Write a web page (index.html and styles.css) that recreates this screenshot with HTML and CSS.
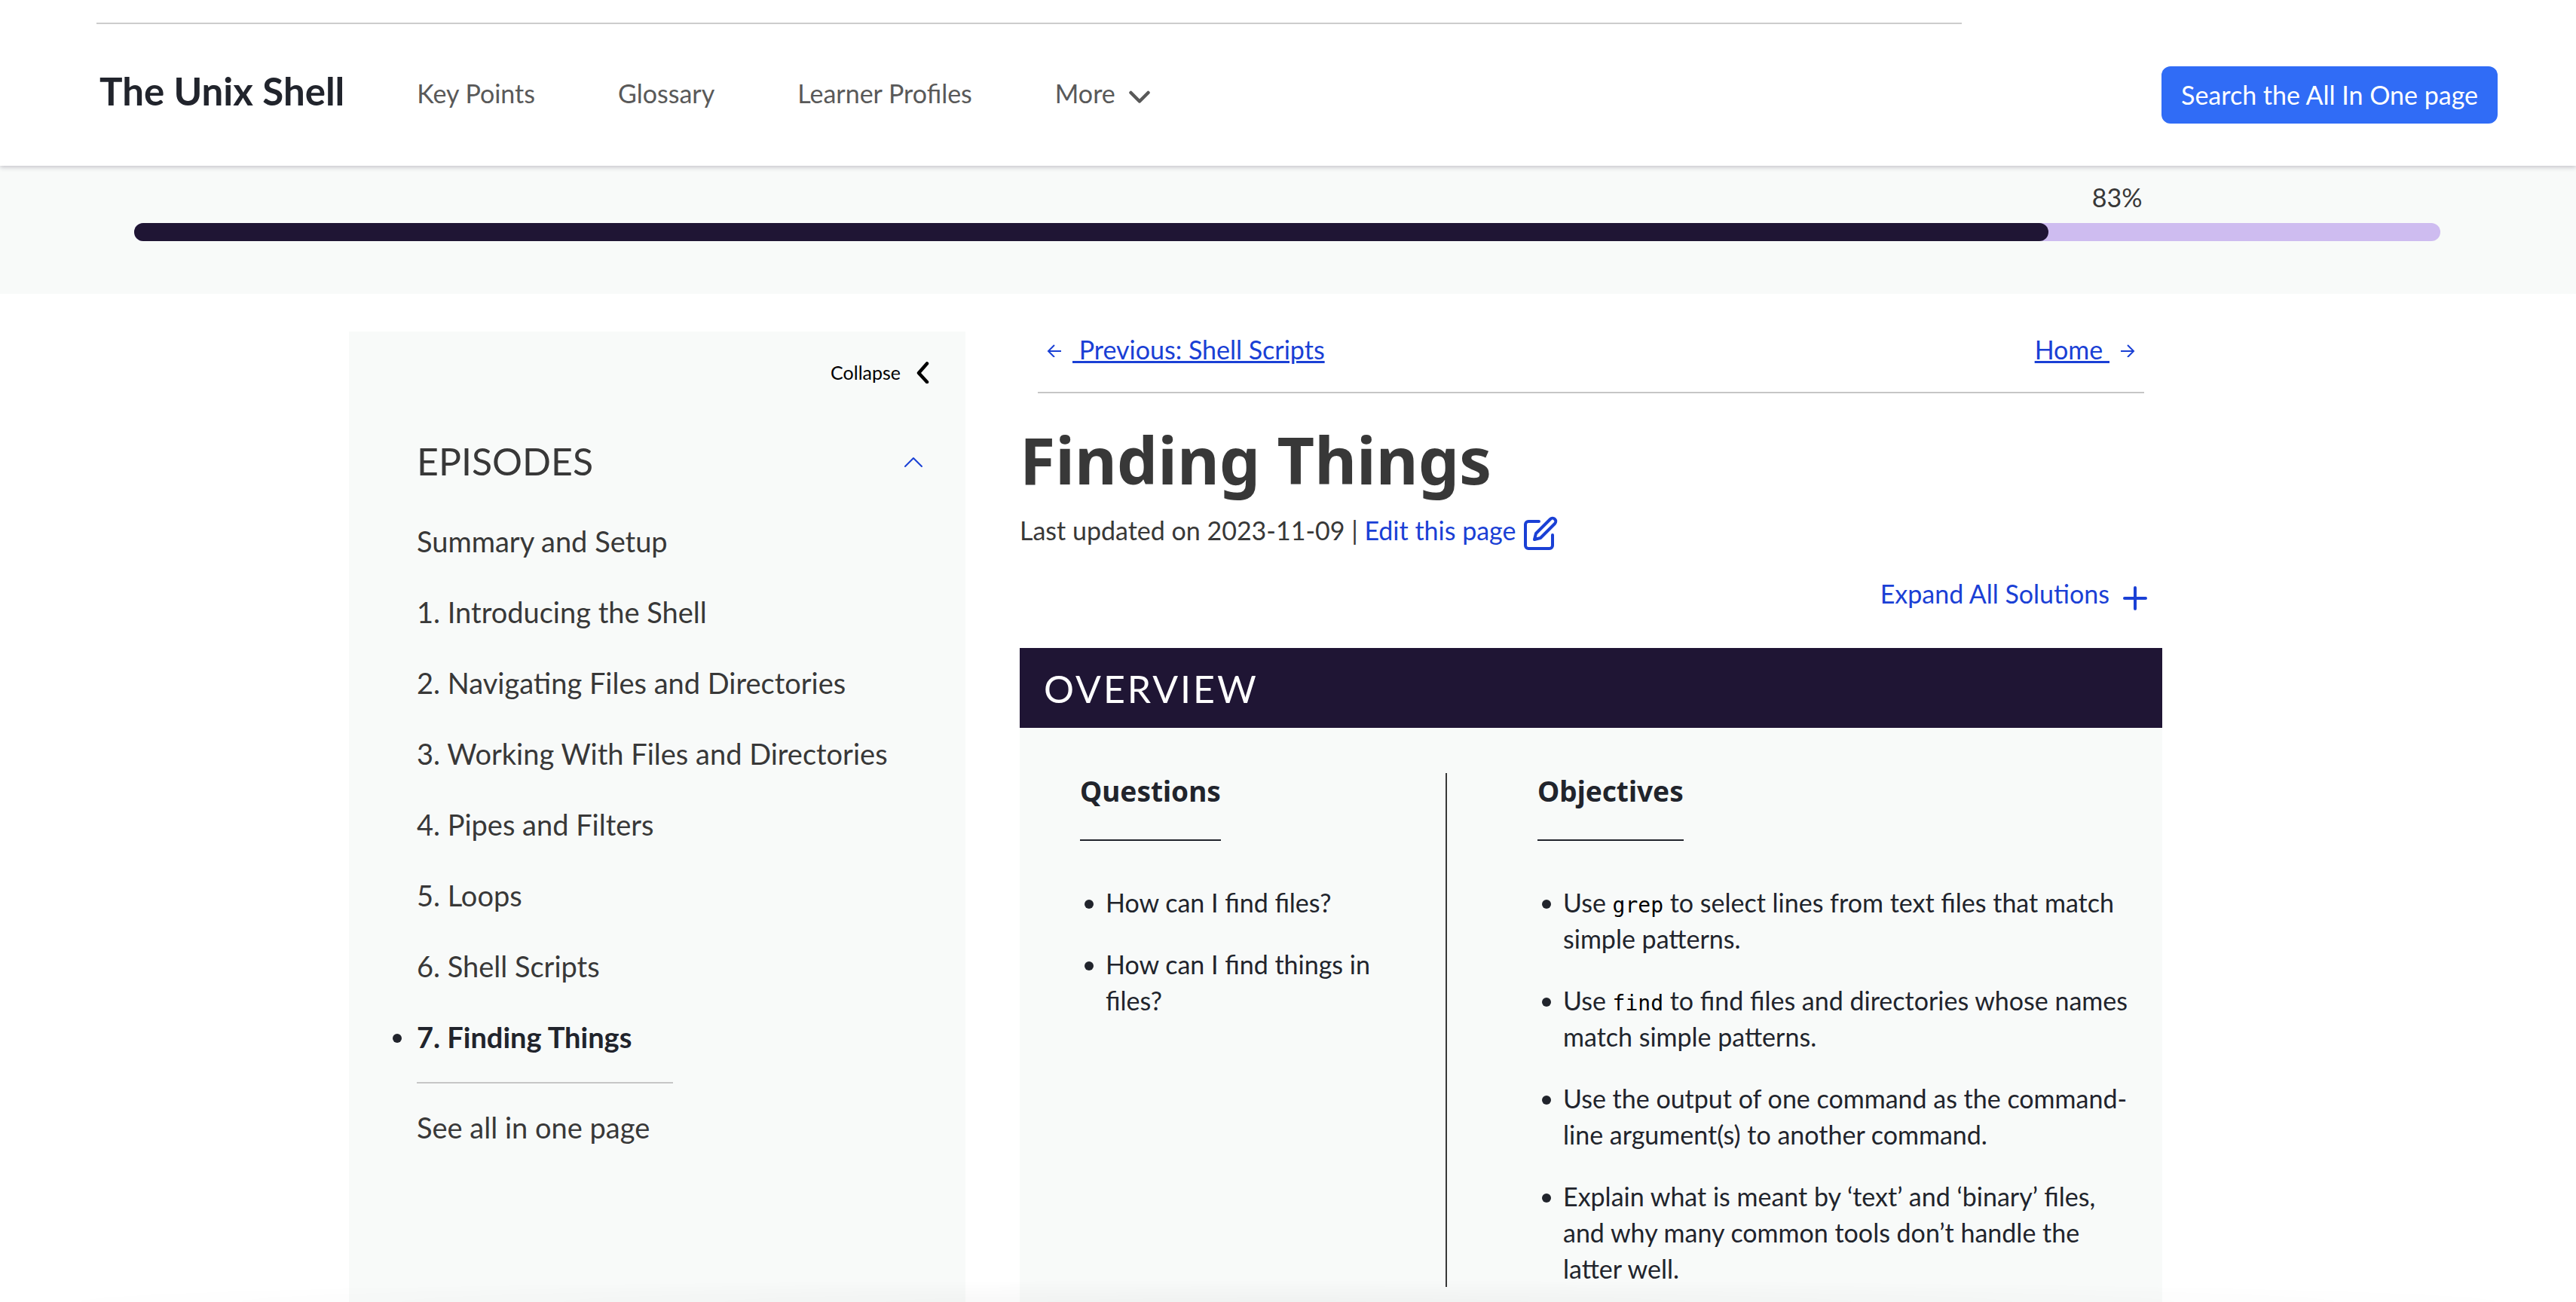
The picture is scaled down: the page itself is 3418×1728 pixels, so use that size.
FILE: index.html
```html
<!DOCTYPE html>
<html lang="en">
<head>
<meta charset="utf-8">
<title>The Unix Shell: Finding Things</title>
<link rel="stylesheet" href="styles.css">
</head>
<body>
<header class="site-header">
  <hr class="header-rule">
  <div class="header-bar">
    <a class="brand" href="#">The Unix Shell</a>
    <nav class="main-nav" aria-label="Main">
      <a href="#">Key Points</a>
      <a href="#">Glossary</a>
      <a href="#">Learner Profiles</a>
      <button class="more" type="button">More
        <svg width="32" height="32" viewBox="0 0 32 32" aria-hidden="true"><path d="M4.500 15L16 26.500 27.500 15" fill="none" stroke="currentColor" stroke-width="4.500" stroke-linecap="round" stroke-linejoin="round"/></svg>
      </button>
    </nav>
    <button class="search" type="button">Search the All In One page</button>
  </div>
</header>

<section class="progress" aria-label="Lesson progress">
  <div class="progress-label" style="width: 83%"><span>83%</span></div>
  <div class="track"><div class="fill" style="width: 83%"></div></div>
</section>

<div class="layout">
  <aside class="sidebar">
    <button class="collapse" type="button">Collapse
      <svg width="18" height="30" viewBox="0 0 18 30" aria-hidden="true"><path d="M15 3.500L4 16l11 12" fill="none" stroke="currentColor" stroke-width="4.500" stroke-linecap="round" stroke-linejoin="round"/></svg>
    </button>
    <button class="episodes-toggle" type="button">EPISODES
      <svg width="26" height="20" viewBox="0 0 26 20" aria-hidden="true"><path d="M2 17L13 6l11 11" fill="none" stroke="#1a40d5" stroke-width="2" stroke-linecap="round" stroke-linejoin="round"/></svg>
    </button>
    <ul class="episodes">
      <li><a href="#">Summary and Setup</a></li>
      <li><a href="#">1. Introducing the Shell</a></li>
      <li><a href="#">2. Navigating Files and Directories</a></li>
      <li><a href="#">3. Working With Files and Directories</a></li>
      <li><a href="#">4. Pipes and Filters</a></li>
      <li><a href="#">5. Loops</a></li>
      <li><a href="#">6. Shell Scripts</a></li>
      <li class="current">7. Finding Things</li>
    </ul>
    <hr class="sidebar-rule">
    <a class="all-in-one" href="#">See all in one page</a>
  </aside>

  <main class="content">
    <nav class="pager" aria-label="Episodes">
      <div class="pager-item">
        <svg width="20" height="20" viewBox="0 0 20 20" aria-hidden="true"><path d="M19 12H2M10 4l-8 8 8 8" fill="none" stroke="currentColor" stroke-width="2"/></svg>
        <a href="#">&nbsp;Previous: Shell Scripts</a>
      </div>
      <div class="pager-item">
        <a href="#">Home&nbsp;</a>
        <svg width="20" height="20" viewBox="0 0 20 20" aria-hidden="true"><path d="M1 12h17M10 4l8 8-8 8" fill="none" stroke="currentColor" stroke-width="2"/></svg>
      </div>
    </nav>
    <h1>Finding Things</h1>
    <p class="updated">Last updated on 2023-11-09 | <a href="#">Edit this page <svg width="48" height="48" viewBox="0 0 24 24" aria-hidden="true"><path d="M11 4H4a2 2 0 0 0-2 2v14a2 2 0 0 0 2 2h14a2 2 0 0 0 2-2v-7M18.500 2.500a2.121 2.121 0 0 1 3 3L12 15l-4 1 1-4z" fill="none" stroke="currentColor" stroke-width="2" stroke-linecap="round" stroke-linejoin="round"/></svg></a></p>
    <button class="expand" type="button">Expand All Solutions
      <svg width="36" height="36" viewBox="0 0 36 36" aria-hidden="true"><path d="M18 4v28M4 18h28" fill="none" stroke="currentColor" stroke-width="4" stroke-linecap="round"/></svg>
    </button>
    <section class="overview">
      <h2>OVERVIEW</h2>
      <div class="overview-body">
        <div class="questions">
          <h3>Questions</h3>
          <ul>
            <li>How can I find files?</li>
            <li>How can I find things in files?</li>
          </ul>
        </div>
        <div class="objectives">
          <h3>Objectives</h3>
          <ul>
            <li>Use <code>grep</code> to select lines from text files that match simple patterns.</li>
            <li>Use <code>find</code> to find files and directories whose names match simple patterns.</li>
            <li>Use the output of one command as the command-line argument(s) to another command.</li>
            <li>Explain what is meant by ‘text’ and ‘binary’ files, and why many common tools don’t handle the latter well.</li>
          </ul>
        </div>
      </div>
    </section>
  </main>
</div>
<div class="bottom-shade"></div>
</body>
</html>
```

FILE: styles.css
```css
* { box-sizing: border-box; }

body {
  margin: 0;
  background: #fff;
  color: #383838;
  font: 34px/48px Lato, "Open Sans", sans-serif;
}

a { color: inherit; text-decoration: none; }

button {
  display: flex;
  align-items: center;
  padding: 0;
  border: 0;
  background: none;
  color: inherit;
  font: inherit;
  cursor: pointer;
}

ul { margin: 0; padding: 0; list-style: none; }

svg { flex: none; }

/* Header */
.site-header {
  position: relative;
  padding: 30px 104px 0 128px;
  background: #fff;
  box-shadow: 0 2px 6px rgba(30, 20, 50, 0.24);
}

.header-rule {
  width: 78%;
  max-width: 2475px;
  height: 2px;
  margin: 0;
  border: 0;
  background: #ccc;
}

.header-bar {
  display: flex;
  align-items: center;
  height: 188px;
}

.brand {
  padding: 0 96px 10px 4px;
  color: #21242c;
  font-size: 51px;
  font-weight: 700;
}

.main-nav {
  display: flex;
  gap: 110px;
  padding-bottom: 4px;
  color: #595959;
}

.more { gap: 16px; }

.search {
  margin-left: auto;
  padding: 14px 26px;
  border-radius: 12px;
  background: #306cf6;
  color: #fff;
}

/* Progress */
.progress {
  padding: 18px 180px 70px 178px;
  background: #f8faf9;
}

.progress-label {
  display: flex;
  justify-content: flex-end;
  height: 58px;
}

.progress-label span {
  width: 0;
  margin-right: -58px;
  white-space: nowrap;
}

.track {
  height: 24px;
  border-radius: 12px;
  background: #cebcf0;
}

.fill {
  height: 100%;
  border-radius: 12px;
  background: #1f1534;
}

/* Page columns */
.layout {
  display: grid;
  grid-template-columns: 818fr 1516fr;
  column-gap: 72px;
  padding: 50px 549px 0 463px;
}

.sidebar {
  padding: 30px 44px 0 90px;
  background: #f8faf9;
}

.collapse {
  gap: 20px;
  margin-left: auto;
  padding-right: 4px;
  color: #000;
  font-size: 25px;
}

.episodes-toggle {
  justify-content: space-between;
  width: 100%;
  margin: 70px 0 58px;
  padding-right: 12px;
  font-size: 50px;
}

.episodes {
  display: grid;
  gap: 46px;
  font-size: 38px;
}

.current {
  position: relative;
  color: #21242c;
  font-weight: 700;
}

.current::before {
  content: "";
  position: absolute;
  top: 20px;
  left: -32px;
  width: 12px;
  height: 12px;
  border-radius: 50%;
  background: currentColor;
}

.sidebar-rule {
  width: 340px;
  height: 2px;
  margin: 36px 0 34px;
  border: 0;
  background: #c6c6c6;
}

.all-in-one {
  display: block;
  font-size: 38px;
}

.pager {
  display: flex;
  justify-content: space-between;
  margin: 0 24px;
  padding: 0 12px 32px;
  border-bottom: 2px solid #c6c6c6;
  color: #1a40d5;
}

.pager-item {
  display: flex;
  align-items: center;
  gap: 14px;
}

.pager-item a {
  text-decoration: underline;
  text-decoration-thickness: 3px;
  text-underline-offset: 2px;
}

h1, h3 { font-family: "Noto Sans", "Open Sans", sans-serif; }

h1 {
  margin: 34px 0 16px;
  font-size: 86px;
  line-height: 108px;
}

.updated { margin: 0 0 32px; }
.updated a, .expand { color: #1a40d5; }
.updated svg { vertical-align: middle; }

.expand {
  align-items: flex-end;
  gap: 16px;
  margin: 0 18px 48px auto;
}

.overview { background: #f8faf9; }

h2 {
  margin: 0;
  padding: 26px 32px 24px;
  background: #1f1534;
  color: #fff;
  font-size: 50px;
  font-weight: 400;
  line-height: 56px;
  letter-spacing: 3px;
}

.overview-body {
  display: grid;
  grid-template-columns: 487fr 909fr;
  padding: 60px 40px 20px 80px;
  color: #21242c;
}

.questions {
  padding-right: 80px;
  border-right: 2px solid #383838;
}

.objectives { padding-left: 120px; }

h3 {
  width: max-content;
  margin: 0 0 58px;
  padding-bottom: 40px;
  border-bottom: 2px solid #21242c;
  font-size: 37px;
  line-height: 48px;
}

.overview ul { display: grid; gap: 34px; }

.overview li { position: relative; padding-left: 34px; }

.overview li::before {
  content: "";
  position: absolute;
  top: 20px;
  left: 6px;
  width: 12px;
  height: 12px;
  border-radius: 50%;
  background: currentColor;
}

code {
  color: #000;
  font: 28px/1 "DejaVu Sans Mono", monospace;
}

/* Soft shade along the foot of the window, fading out at both ends */
.bottom-shade {
  position: fixed;
  right: 0;
  bottom: 0;
  left: 0;
  height: 30px;
  background: radial-gradient(ellipse 50% 100% at bottom, rgba(0, 0, 0, 0.03), transparent);
}
```
